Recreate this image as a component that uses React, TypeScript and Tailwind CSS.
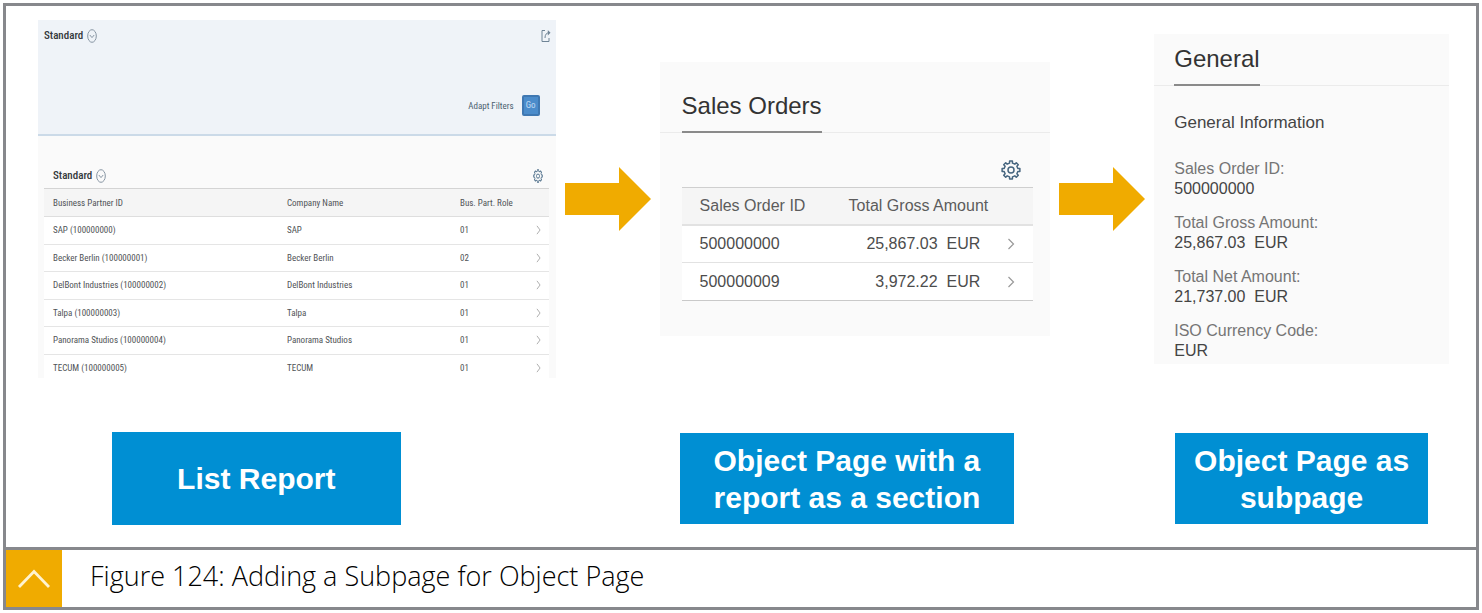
import React from "react";

const narrow = "font-['Liberation_Sans_Narrow','Roboto_Condensed','Liberation_Sans',sans-serif]";

const partners = [
  { name: "SAP", id: "100000000", role: "01" },
  { name: "Becker Berlin", id: "100000001", role: "02" },
  { name: "DelBont Industries", id: "100000002", role: "01" },
  { name: "Talpa", id: "100000003", role: "01" },
  { name: "Panorama Studios", id: "100000004", role: "01" },
  { name: "TECUM", id: "100000005", role: "01" },
];

const orders = [
  { id: "500000000", amount: "25,867.03" },
  { id: "500000009", amount: "3,972.22" },
];

const details = [
  { label: "Sales Order ID:", value: "500000000" },
  { label: "Total Gross Amount:", value: "25,867.03\u00a0 EUR" },
  { label: "Total Net Amount:", value: "21,737.00\u00a0 EUR" },
  { label: "ISO Currency Code:", value: "EUR" },
];

function gearPath(teeth: number, outer: number, inner: number) {
  const step = (Math.PI * 2) / teeth;
  const points: string[] = [];
  for (let i = 0; i < teeth; i++) {
    const a = i * step - Math.PI / 2;
    const corners: [number, number][] = [
      [a - step * 0.27, inner],
      [a - step * 0.2, outer],
      [a + step * 0.2, outer],
      [a + step * 0.27, inner],
    ];
    corners.forEach(([t, r]) => points.push(`${(10 + r * Math.cos(t)).toFixed(2)} ${(10 + r * Math.sin(t)).toFixed(2)}`));
  }
  return `M${points.join("L")}Z`;
}

function Gear({ className }: { className: string }) {
  return (
    <svg viewBox="0 0 20 20" preserveAspectRatio="none" className={className} fill="none" stroke="currentColor" strokeWidth="1.5" strokeLinejoin="round" aria-hidden="true">
      <path d={gearPath(8, 9, 7)} />
      <circle cx="10" cy="10" r="3" />
    </svg>
  );
}

function Chevron({ className }: { className: string }) {
  return (
    <svg viewBox="0 0 8 12" preserveAspectRatio="none" className={className} fill="none" stroke="currentColor" strokeWidth="1.2" aria-hidden="true">
      <path d="M1.5 1L6.5 6L1.5 11" />
    </svg>
  );
}

function VariantTitle() {
  return (
    <div className="flex items-center gap-1">
      <h2 className={`${narrow} text-[11px] leading-4 font-medium text-[#33373b]`}>Standard</h2>
      <button type="button" aria-label="Select view" className="text-[#8795a3]">
        <svg viewBox="0 0 10 14" className="block h-3.5 w-2.5" fill="none" stroke="currentColor" aria-hidden="true">
          <ellipse cx="5" cy="7" rx="4.3" ry="6.3" />
          <path d="M2.8 6L5 8.6L7.2 6" />
        </svg>
      </button>
    </div>
  );
}

function ListReport() {
  return (
    <section className="flex h-[358px] flex-col overflow-hidden bg-[#fafafa]">
      <div className="flex h-29 shrink-0 flex-col justify-between border-b-2 border-[#cbdae8] bg-[#eff3f8] pt-2 pr-[5px] pb-[18px] pl-[6px]">
        <div className="flex items-center justify-between">
          <VariantTitle />
          <button type="button" aria-label="Share" className="text-[#6f8496]">
            <svg viewBox="0 0 10 14" className="block h-3.5 w-2.5" fill="none" stroke="currentColor" aria-hidden="true">
              <path d="M4 1.5H1V12.5H8V9" />
              <path d="M4 9C4 5.5 5.5 3.8 8 3.8" />
              <path d="M6.8 1L9.5 3.8L6.8 6.6Z" fill="currentColor" stroke="none" />
            </svg>
          </button>
        </div>
        <div className="flex items-center justify-end gap-2 pr-[11px]">
          <button type="button" className={`${narrow} text-[9px] leading-4 text-[#4c5f70]`}>Adapt Filters</button>
          <button type="button" className={`${narrow} flex h-[21px] w-[18px] items-center justify-center rounded-[2px] border-2 border-[#3f78b2] bg-[#4b8ccb] text-[9px] text-[#c3dcf3]`}>Go</button>
        </div>
      </div>
      <div className="flex h-[52px] shrink-0 items-end justify-between pr-[13px] pb-1 pl-[15px]">
        <VariantTitle />
        <button type="button" aria-label="Table settings" className="flex h-4 items-center text-[#56758f]">
          <Gear className="block h-3.5 w-2.5" />
        </button>
      </div>
      <div className="pr-[7px] pl-[6px]">
        <table className={`${narrow} h-[194px] w-full table-fixed border-collapse text-left text-[9px] leading-4 text-[#505356]`}>
          <thead>
            <tr className="h-7 border-t border-b border-t-[#d4d4d4] border-b-[#dedede] bg-[#f5f5f5]">
              <th className="w-[234px] pl-[9px] font-normal">Business Partner ID</th>
              <th className="w-[173px] pl-[9px] font-normal">Company Name</th>
              <th className="pl-[9px] font-normal whitespace-nowrap">Bus. Part. Role</th>
              <th className="w-6" />
            </tr>
          </thead>
          <tbody>
            {partners.map((p) => (
              <tr key={p.id} className="h-[27px] border-b border-[#e5e5e5] bg-white">
                <td className="pl-[9px]">{p.name} ({p.id})</td>
                <td className="pl-[9px]">{p.name}</td>
                <td className="pl-[9px]">{p.role}</td>
                <td className="pr-2">
                  <Chevron className="ml-auto h-2.5 w-[5px] text-[#a3a3a3]" />
                </td>
              </tr>
            ))}
          </tbody>
        </table>
      </div>
    </section>
  );
}

function SalesOrders() {
  return (
    <section className="bg-[#fafafa] pt-[29px] pb-[35px]">
      <div className="flex border-b border-[#ebebeb] pl-[22px]">
        <h2 className="-mb-px border-b-2 border-[#8a8a8a] pb-[10px] text-2xl leading-[30px] whitespace-nowrap text-[#333333]">Sales Orders</h2>
      </div>
      <div className="flex h-[54px] items-end justify-end pr-[29px] pb-[7px]">
        <button type="button" aria-label="Table settings" className="text-[#46657f]">
          <Gear className="block size-5" />
        </button>
      </div>
      <div className="pr-[17px] pl-[22px]">
        <table className="w-full border-collapse text-base leading-5 whitespace-nowrap text-[#4c4c4c]">
          <thead>
            <tr className="h-[37px] border-t border-b-2 border-t-[#cfcfcf] border-b-[#e2e2e2] bg-[#f5f5f5] text-[#5c5c5c]">
              <th className="pl-[18px] text-left font-normal">Sales Order ID</th>
              <th className="text-right font-normal">Total Gross Amount</th>
              <th className="w-[45px]" />
            </tr>
          </thead>
          <tbody>
            {orders.map((o) => (
              <tr key={o.id} className="h-[38px] border-b border-[#e2e2e2] bg-white last:border-[#c9c9c9]">
                <td className="pl-[18px]">{o.id}</td>
                <td className="pr-2 text-right">{o.amount}&nbsp; EUR</td>
                <td className="pr-[18px]">
                  <Chevron className="ml-auto h-3 w-2 text-[#999999]" />
                </td>
              </tr>
            ))}
          </tbody>
        </table>
      </div>
    </section>
  );
}

function GeneralInfo() {
  return (
    <section className="bg-[#fafafa] pt-[10px] pb-[3px]">
      <div className="flex border-b border-[#ebebeb] pl-5">
        <h2 className="-mb-px border-b-2 border-[#8a8a8a] pb-[10px] text-2xl leading-[30px] text-[#333333]">General</h2>
      </div>
      <div className="pt-[25px] pl-5">
        <h3 className="text-[17px] leading-6 text-[#444444]">General Information</h3>
        <dl className="flex flex-col gap-[14px] pt-6 text-base leading-5">
          {details.map((d) => (
            <div key={d.label}>
              <dt className="text-[#757575]">{d.label}</dt>
              <dd className="text-[#444444]">{d.value}</dd>
            </div>
          ))}
        </dl>
      </div>
    </section>
  );
}

function Arrow() {
  return (
    <svg viewBox="0 0 86 64" className="block w-full" aria-hidden="true">
      <path d="M0 16H54V0L86 32L54 64V48H0Z" fill="#f0ab00" />
    </svg>
  );
}

const labelBox = "flex items-center justify-center bg-[#008fd3] text-center text-[30px] leading-[37px] font-bold text-white";

export default function App() {
  return (
    <main className="bg-white p-[3px] font-['Liberation_Sans',Arial,sans-serif]">
      <figure className="border-3 border-[#87888c]">
        <div className="grid grid-cols-[518fr_86px_391fr_86px_295fr] items-center gap-x-[9px] gap-y-[54px] pt-[14px] pr-[27px] pb-[22px] pl-8">
          <ListReport />
          <Arrow />
          <SalesOrders />
          <Arrow />
          <GeneralInfo />
          <div className="pr-[155px] pl-[74px]">
            <p className={`${labelBox} h-[93px]`}>List Report</p>
          </div>
          <div className="col-start-3 pr-9 pl-5">
            <p className={`${labelBox} h-[91px]`}>Object Page with a<br />report as a section</p>
          </div>
          <div className="col-start-5 pr-[21px] pl-[21px]">
            <p className={`${labelBox} h-[91px]`}>Object Page as<br />subpage</p>
          </div>
        </div>
        <figcaption className="flex h-[60px] border-t-3 border-[#87888c]">
          <div className="flex w-14 items-center justify-center bg-[#f0ab00]">
            <svg viewBox="0 0 34 20" className="h-5 w-[34px]" fill="none" stroke="#fff3d0" strokeWidth="2.8" aria-hidden="true">
              <path d="M2 18L17 2.5L32 18" />
            </svg>
          </div>
          <p className="pt-2 pl-7 font-['Open_Sans','Noto_Sans',sans-serif] text-[27px] leading-9 font-light text-black">Figure 124: Adding a Subpage for Object Page</p>
        </figcaption>
      </figure>
    </main>
  );
}
